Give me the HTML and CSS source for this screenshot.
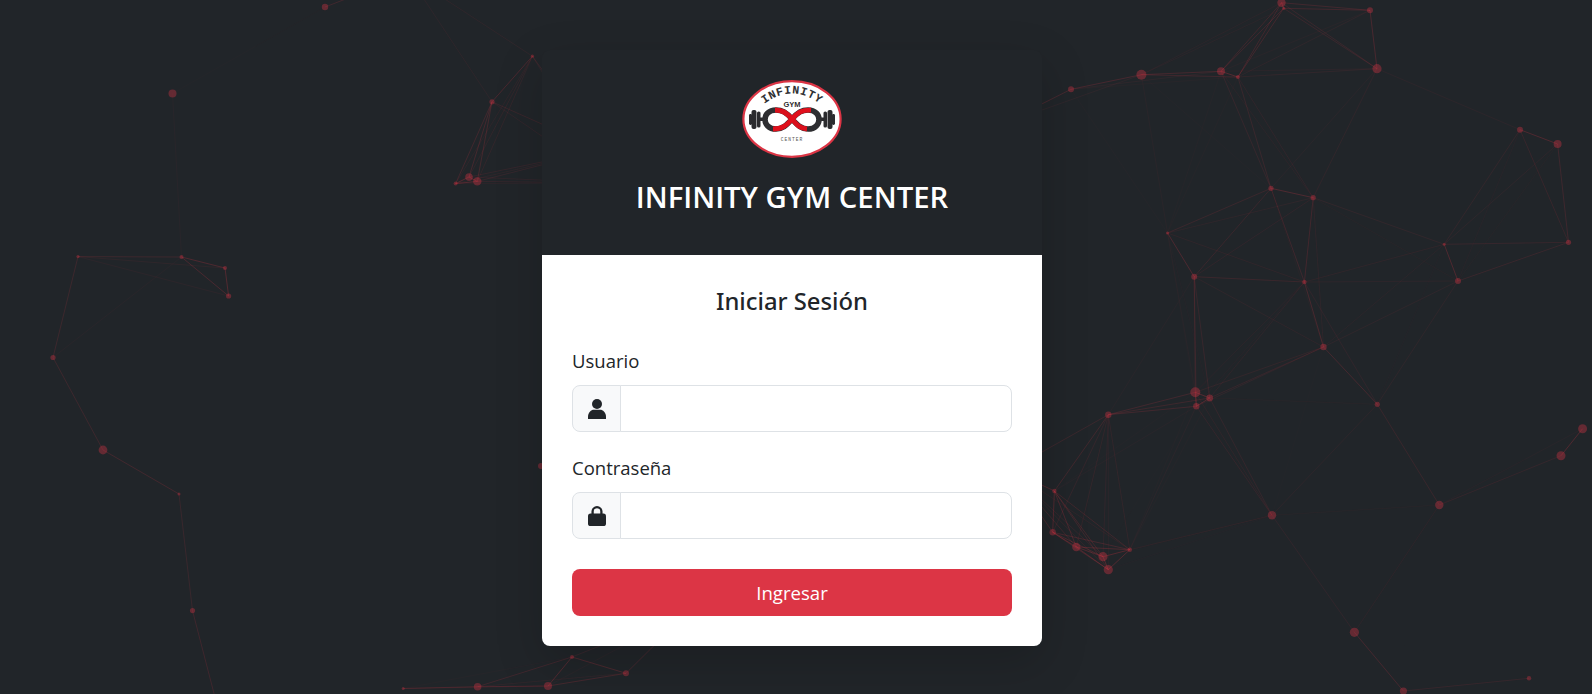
FILE: index.html
```html
<!DOCTYPE html>
<html lang="es">
<head>
<meta charset="utf-8">
<title>Infinity Gym Center</title>
<link rel="stylesheet" href="styles.css">
</head>
<body>
<svg id="particles" class="particles" width="1592" height="694" viewBox="0 0 1592 694" aria-hidden="true"></svg>
<main class="page">
  <section class="card">
    <header class="card-head">
      <svg class="logo" viewBox="0 0 100 78" width="100" height="78" role="img" aria-label="Infinity Gym Center">
        <defs>
          <path id="arc" d="M17 28 Q50 -1 83 28"/>
        </defs>
        <ellipse cx="50" cy="39" rx="48.6" ry="37.8" fill="#fff" stroke="#dc3545" stroke-width="2.2"/>
        <text class="logo-arc"><textPath href="#arc" startOffset="50%" text-anchor="middle">INFINITY</textPath></text>
        <text class="logo-gym" x="50" y="27" text-anchor="middle">GYM</text>
        <g fill="#2b2b2e">
          <rect x="7" y="34" width="3" height="11" rx="1.4"/>
          <rect x="9.5" y="30" width="5" height="19" rx="2"/>
          <rect x="15" y="31.5" width="3.5" height="16" rx="1.6"/>
          <rect x="18" y="37.5" width="5" height="3.5"/>
          <rect x="77" y="37.5" width="5" height="3.5"/>
          <rect x="81.5" y="31.5" width="3.5" height="16" rx="1.6"/>
          <rect x="85.5" y="30" width="5" height="19" rx="2"/>
          <rect x="90" y="34" width="3" height="11" rx="1.4"/>
        </g>
        <path d="M50 39 C44 32 40 30 34 30 C26.5 30 23 35 23 39.5 C23 44 26.5 49 34 49 C40 49 44 46 50 39 C56 32 60 30 66 30 C73.5 30 77 35 77 39.5 C77 44 73.5 49 66 49 C60 49 56 46 50 39 Z" fill="none" stroke="#2e2e31" stroke-width="5.6"/>
        <path d="M33 30 C41 30 44.5 33 50 39 C55 45 58 48.5 65 49" fill="none" stroke="#d9101c" stroke-width="5"/>
        <path d="M31 49 C40 49 44 46 50 39 C56 32 60 30 69 30.2" fill="none" stroke="#e0101c" stroke-width="4.8"/>
        <text class="logo-center" x="50" y="60.5" text-anchor="middle">CENTER</text>
      </svg>
      <h1 class="brand">INFINITY GYM CENTER</h1>
    </header>
    <form class="card-body">
      <h2 class="form-title">Iniciar Sesión</h2>
      <div class="field">
        <label class="field-label" for="usuario">Usuario</label>
        <div class="input-group">
          <span class="addon">
            <svg class="addon-icon" viewBox="0 0 18 20" width="18" height="20" aria-hidden="true">
              <circle cx="9" cy="5" r="5"/>
              <path d="M0 20 V18 C0 13.5 3 10.8 6 10.8 H12 C15 10.8 18 13.5 18 18 V20 Z"/>
            </svg>
          </span>
          <input class="control" id="usuario" type="text">
        </div>
      </div>
      <div class="field">
        <label class="field-label" for="clave">Contraseña</label>
        <div class="input-group">
          <span class="addon">
            <svg class="addon-icon" viewBox="0 0 18 20" width="18" height="20" aria-hidden="true">
              <path class="shackle" d="M4.6 9 V5.6 A4.4 4.4 0 0 1 13.4 5.6 V9"/>
              <rect x="0" y="7.6" width="18" height="12.4" rx="2.6"/>
            </svg>
          </span>
          <input class="control" id="clave" type="password">
        </div>
      </div>
      <button class="submit" type="button">Ingresar</button>
    </form>
  </section>
</main>
<script src="particles.js"></script>
</body>
</html>
```
FILE: styles.css
```css
* { box-sizing: border-box; }
html, body { margin: 0; height: 100%; }
body {
  background: #212529;
  color: #212529;
  font-family: "Open Sans", "Noto Sans", "Liberation Sans", sans-serif;
  overflow: hidden;
  position: relative;
}
.particles { position: absolute; left: 0; top: 0; display: block; }
.particles .link { stroke: #dc3545; stroke-width: 1; }
.particles .node { fill: #dc3545; fill-opacity: .36; }
.page {
  position: relative;
  display: flex;
  justify-content: center;
  align-items: flex-start;
  padding: 50px 8px 0 0;
  min-height: 100%;
}
.card {
  width: 500px;
  border-radius: 8px;
  box-shadow: 0 16px 48px rgba(0, 0, 0, .175);
  overflow: hidden;
}
.card-head {
  background: #212529;
  height: 205px;
  padding-top: 30px;
  display: flex;
  flex-direction: column;
  align-items: center;
}
.logo { display: block; flex: none; }
.logo-arc { font: 700 11.5px "Liberation Mono", monospace; fill: #2f2f32; letter-spacing: .6px; }
.logo-gym { font: 700 7.5px "Liberation Sans", sans-serif; fill: #2f2f32; }
.logo-center { font: 400 4.6px "Liberation Mono", monospace; fill: #555; letter-spacing: 1px; }
.brand {
  margin: 22px 0 0;
  font-size: 29.3px;
  line-height: 1.2;
  font-weight: 600;
  color: #fff;
}
.card-body {
  padding: 30px;
  display: flex;
  flex-direction: column;
  background: #fff;
}
.form-title {
  margin: 2px 0 32px;
  font-family: "Noto Sans", "Open Sans", sans-serif;
  font-size: 23.8px;
  line-height: 28.8px;
  font-weight: 500;
  text-align: center;
  color: #212529;
}
.field { margin-bottom: 23px; }
.field-label {
  display: block;
  font-size: 18.5px;
  line-height: 26.4px;
  margin-bottom: 11px;
  color: #212529;
}
.input-group { display: flex; height: 46.6px; }
.addon {
  flex: none;
  width: 49px;
  display: flex;
  align-items: center;
  justify-content: center;
  background: #f8f9fa;
  border: 1px solid #dee2e6;
  border-radius: 8px 0 0 8px;
}
.addon-icon { display: block; fill: #212529; }
.shackle { fill: none; stroke: #212529; stroke-width: 2.3; }
.control {
  flex: 1;
  min-width: 0;
  margin-left: -1px;
  border: 1px solid #dee2e6;
  border-radius: 0 8px 8px 0;
  background: #fff;
  font: inherit;
  padding: 0 16px;
}
.submit {
  margin-top: 7px;
  height: 47px;
  border: 0;
  border-radius: 8px;
  background: #dc3545;
  color: #fff;
  font: 500 18.6px "Open Sans", "Noto Sans", sans-serif;
}
```
FILE: particles.js
```js
var nodes = [
  [325,7,3.2],[172.5,93.4,4],[78,256.6,1.6],[181.5,257,2],[225,268,2],[228.6,296,2.6],[53,357.5,2.6],[103,450,4.4],[179,494,1.5],[192.5,610.6,2.6],[217,705,2],
  [532.4,56.2,1.6],[492,101.8,2.6],[469,177,3.8],[477.3,181.4,4.2],[455.6,183.6,2],[408,-25,2],
  [403.2,688.5,1.5],[477.6,686.7,3.8],[548,686,4],[572,657,2],[626,673.3,3],[541,466,3],
  [1281.5,2.7,4.2],[1283.7,8.3,1.6],[1370,10.3,3],[1141.4,74.7,5],[1221,71.3,4],[1237.9,77,2],[1377,68.7,4.6],[1071,89.3,3],
  [1520,129.7,3],[1557.6,144,4],[1271,188.3,2.6],[1313.2,197.7,2.6],[1167.5,233,1.6],[1444.2,244.3,1.5],[1568.5,242.3,2.6],[1194.2,276.7,3],[1304.4,282,2.2],[1458,281,3],[1323.5,347,3.2],
  [1195.3,392.3,5],[1209.7,398,3.4],[1196.3,406.3,3.2],[1108.3,414.7,3.2],[1377.3,404.3,2.6],[1582.6,428.7,4.5],[1561,455.7,4.5],[1439.3,505,4.2],[1054.4,491,2.2],[1052.7,532.3,3.2],[1076.3,547,4.2],[1103,556.7,4.6],[1129.8,549.7,2.2],[1108.3,569.7,4.6],[1272,515.3,4.2],[1354.4,632.3,4.6],[1529,678.3,2.2],[1403.4,691,3.6],
  [610,183,0],[690,610,0],[1000,125,0],[1010,470,0],[600,150,0]
];
var MAX = 182;
var NS = "http://www.w3.org/2000/svg";
var svg = document.getElementById("particles");
nodes.forEach(function (a, i) {
  nodes.slice(i + 1).forEach(function (b) {
    var d = Math.hypot(a[0] - b[0], a[1] - b[1]);
    if (d >= MAX) return;
    var l = document.createElementNS(NS, "line");
    l.setAttribute("class", "link");
    l.setAttribute("x1", a[0]); l.setAttribute("y1", a[1]);
    l.setAttribute("x2", b[0]); l.setAttribute("y2", b[1]);
    l.setAttribute("stroke-opacity", (0.3 * Math.pow(1 - d / MAX, 0.85)).toFixed(3));
    svg.appendChild(l);
  });
});
nodes.forEach(function (a) {
  if (!a[2]) return;
  var c = document.createElementNS(NS, "circle");
  c.setAttribute("class", "node");
  c.setAttribute("cx", a[0]); c.setAttribute("cy", a[1]); c.setAttribute("r", a[2]);
  svg.appendChild(c);
});
```
